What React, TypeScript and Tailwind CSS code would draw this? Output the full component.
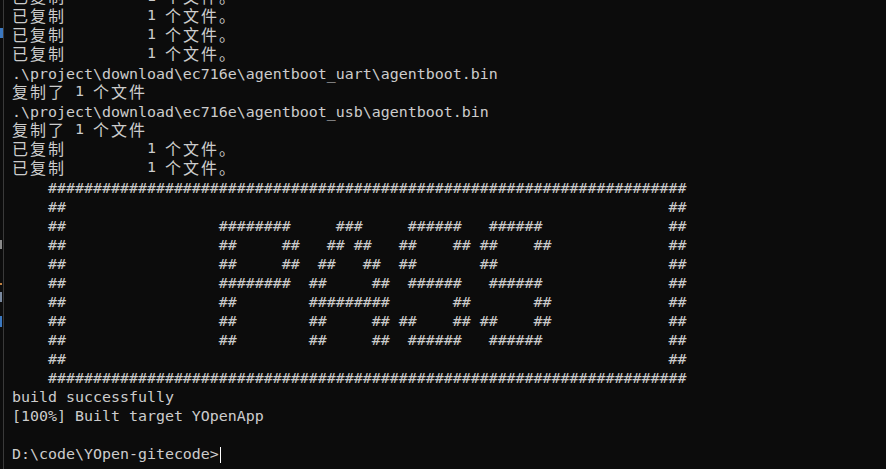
import React from "react";

const copied = "已复制         1 个文件。";
const art = [
  "########     ###     ######   ######  ",
  "##     ##   ## ##   ##    ## ##    ## ",
  "##     ##  ##   ##  ##       ##       ",
  "########  ##     ##  ######   ######  ",
  "##        #########       ##       ## ",
  "##        ##     ## ##    ## ##    ## ",
  "##        ##     ##  ######   ######  ",
];

const bar = "    " + "#".repeat(71);
const empty = "    ##" + " ".repeat(67) + "##";

const lines: string[] = [
  copied,
  copied,
  copied,
  copied,
  ".\\project\\download\\ec716e\\agentboot_uart\\agentboot.bin",
  "复制了 1 个文件",
  ".\\project\\download\\ec716e\\agentboot_usb\\agentboot.bin",
  "复制了 1 个文件",
  copied,
  copied,
  bar,
  empty,
  ...art.map((a) => "    ##" + " ".repeat(17) + a.padEnd(50, " ") + "##"),
  empty,
  bar,
  "build successfully",
  "[100%] Built target YOpenApp",
  "",
];

const isWide = (ch: string) => ch.charCodeAt(0) >= 0x2e80;

// wide glyphs take two cells, like the console does
const Line: React.FC<{ text: string }> = ({ text }) => {
  const parts: React.ReactNode[] = [];
  let run = "";
  let wide = false;
  Array.from(text).forEach((ch, i) => {
    if (isWide(ch)) {
      wide = true;
      if (run) parts.push(run);
      run = "";
      parts.push(
        <span
          key={i}
          className="inline-block h-[19px] w-[18px] align-top text-[16px] leading-[19px] font-['Noto_Sans_CJK_SC',sans-serif]"
        >
          {ch}
        </span>
      );
    } else {
      run += ch;
    }
  });
  if (run) parts.push(run);
  return (
    <div className={wide ? "-mt-[2px] mb-[2px] h-[19px] whitespace-pre" : "h-[19px] whitespace-pre"}>
      {parts.length ? parts : " "}
    </div>
  );
};

export default function App() {
  return (
    <div className="flex h-[469px] w-[886px] overflow-hidden bg-[#0c0c0c] text-[#cccccc]">
      {/* clipped neighbour pane */}
      <div className="relative w-[3px] shrink-0">
        <div className="absolute left-0 top-[28px] h-[10px] w-[3px] bg-[#3b78c0]" />
        <div className="absolute left-0 top-[240px] h-[9px] w-[2px] bg-[#8a8a8a]" />
        <div className="absolute left-0 top-[283px] h-[2px] w-[2px] bg-[#c08040]" />
        <div className="absolute left-0 top-[292px] h-[10px] w-[2px] bg-[#7a8aa0]" />
        <div className="absolute left-0 top-[316px] h-[11px] w-[2px] bg-[#3b78c0]" />
      </div>
      <div className="w-px shrink-0 bg-[#3a3a3a]" />
      <div className="-mt-[11px] flex flex-col pl-[8px] font-['DejaVu_Sans_Mono',monospace] text-[14.94px] leading-[19px]">
        {lines.map((l, i) => (
          <Line key={i} text={l} />
        ))}
        <div className="flex h-[19px] items-center whitespace-pre">
          D:\code\YOpen-gitecode&gt;
          <span className="ml-[1px] inline-block h-[16px] w-[1px] bg-white" />
        </div>
      </div>
    </div>
  );
}
